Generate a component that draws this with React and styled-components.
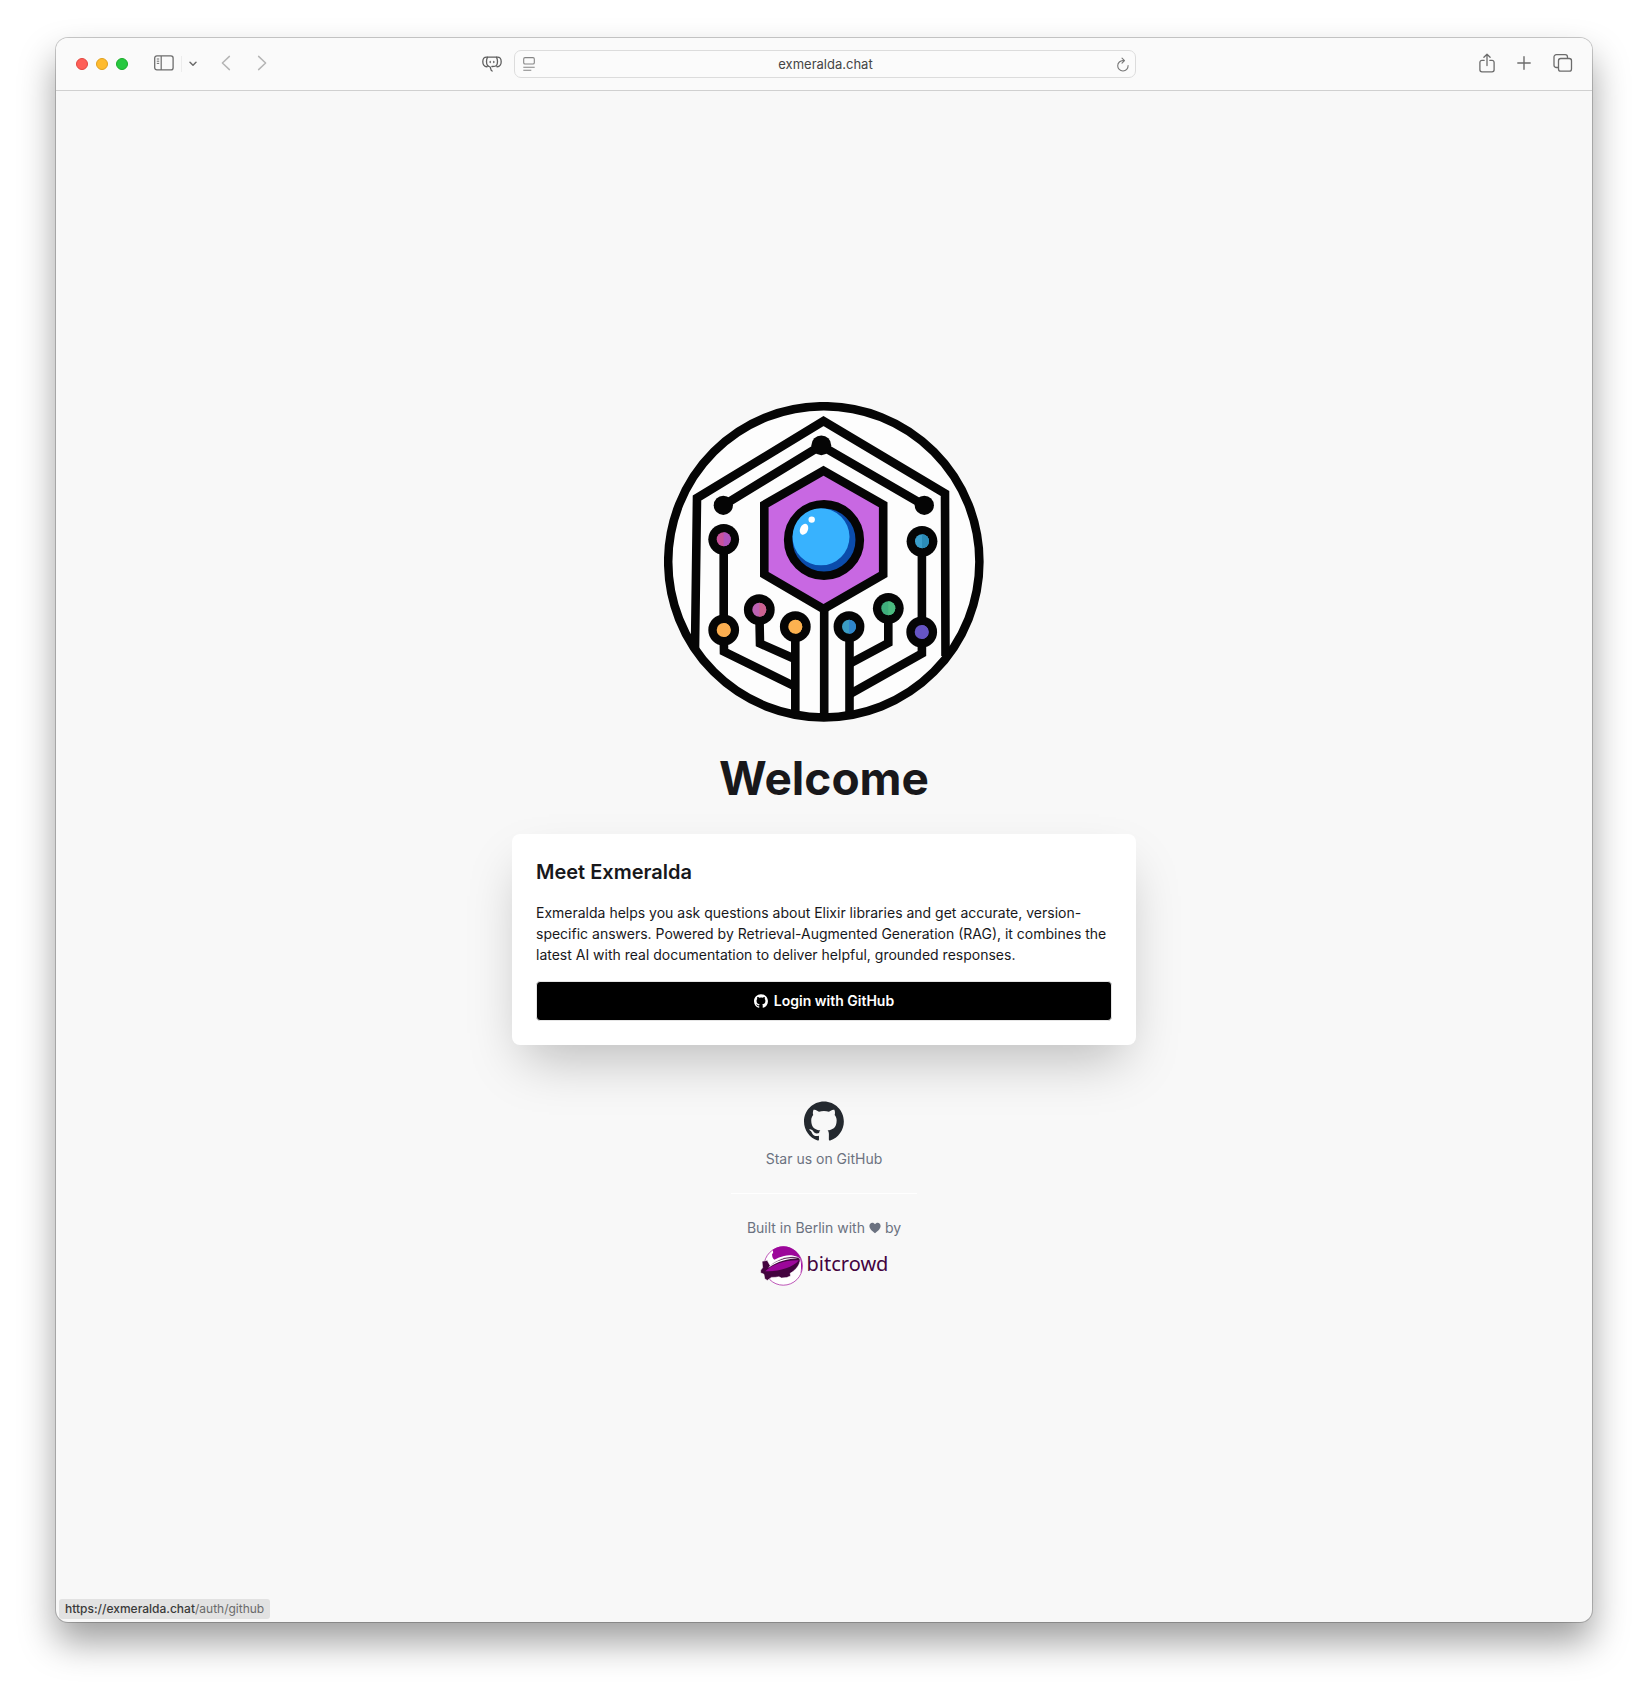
import styled, { createGlobalStyle } from "styled-components";

export default function App() {
  return (
    <>
      <GlobalStyle />
      <Desktop>
        <Window>
          <Toolbar />
          <Page>
            <Logo />
            <Title>Welcome</Title>
            <LoginCard />
            <Footer />
          </Page>
          <StatusBar>
            <strong>https://exmeralda.chat</strong>/auth/github
          </StatusBar>
        </Window>
      </Desktop>
    </>
  );
}

function Toolbar() {
  return (
    <Bar>
      <BarGroup>
        <Lights>
          <Light type="button" aria-label="Close" $color="#fe5f57" $edge="#e2463f" />
          <Light type="button" aria-label="Minimize" $color="#febb2e" $edge="#e0a01d" />
          <Light type="button" aria-label="Zoom" $color="#27c840" $edge="#1aab29" />
        </Lights>
        <SidebarButtons>
          <BarButton type="button" aria-label="Sidebar" $raised>
            <svg width="20" height="16" viewBox="0 0 20 16" fill="none" stroke="#6c6c6c">
              <rect x="0.7" y="0.9" width="18.4" height="14" rx="2.2" strokeWidth="1.3" />
              <path d="M7.2 1v14" strokeWidth="1.2" />
              <path d="M2.8 4h2.4M2.8 6.2h2.4M2.8 8.4h2.4" />
            </svg>
          </BarButton>
          <Separator />
          <BarButton type="button" aria-label="Tab groups">
            <svg width="8" height="6" viewBox="0 0 8 6" fill="none" stroke="#6c6c6c">
              <path d="M1 1.3l3 3 3-3" strokeWidth="1.5" strokeLinecap="round" strokeLinejoin="round" />
            </svg>
          </BarButton>
        </SidebarButtons>
        <HistoryButtons>
          <BarButton type="button" aria-label="Back" $raised>
            <svg width="10" height="16" viewBox="0 0 10 16" fill="none" stroke="#b5b5b5">
              <path d="M8.4 1.4L1.4 8l7 6.6" strokeWidth="1.5" strokeLinecap="round" strokeLinejoin="round" />
            </svg>
          </BarButton>
          <BarButton type="button" aria-label="Forward" $raised>
            <svg width="10" height="16" viewBox="0 0 10 16" fill="none" stroke="#b5b5b5">
              <path d="M1.6 1.4L8.6 8l-7 6.6" strokeWidth="1.5" strokeLinecap="round" strokeLinejoin="round" />
            </svg>
          </BarButton>
        </HistoryButtons>
        <Extension>
          <BarButton type="button" aria-label="Extension">
            <svg width="20" height="16" viewBox="0 0 20 16" fill="none" stroke="#5f5f5f" strokeWidth="1.3" strokeLinecap="round" strokeLinejoin="round">
              <path d="M5.4 1.2h9.2M5.4 1.2C2 .8.8 2.700.8 5.700S2.400 11 5.200 10.700M14.600 1.200c3.400-.4 4.600 1.500 4.600 4.500s-1.600 5.300-4.400 5" />
              <path d="M5.500 1.300C4.100 3.600 4.200 7.600 5.500 9.400c.8 1.100 2.200 1.300 2.700 1.600.6 1.200.2 3.400 2 4M14.500 1.300c1.400 2.300 1.300 6.300 0 8.100-1 1.200-2.300 1.100-4.600 1.100" />
              <path d="M8.200 5.400v1.200M11.800 5.400v1.200" />
            </svg>
          </BarButton>
        </Extension>
      </BarGroup>
      <AddressField>
        <svg width="12" height="14" viewBox="0 0 12 14" fill="none" stroke="#858585" aria-hidden="true">
          <rect x="0.7" y="0.6" width="10.6" height="6.4" rx="1.3" strokeWidth="1.1" />
          <path d="M0.3 10.2h11.4M0.3 13.2h8" strokeWidth="1.1" />
        </svg>
        <Address type="text" aria-label="Address" defaultValue="exmeralda.chat" />
        <BarButton type="button" aria-label="Reload">
          <svg width="12" height="15" viewBox="0 0 12 15" fill="none" stroke="#777" strokeLinecap="round" strokeLinejoin="round">
            <path d="M11.1 8.500A5.200 5.200 0 1 1 6.200 3.600h1.100M5 1.100l2.500 2.500L5 6.100" strokeWidth="1.1" />
          </svg>
        </BarButton>
      </AddressField>
      <BarGroup $end>
        <BarButton type="button" aria-label="Share" $raised>
          <svg width="16" height="20" viewBox="0 0 16 20" fill="none" stroke="#6c6c6c" strokeWidth="1.3" strokeLinecap="round" strokeLinejoin="round">
            <path d="M5.200 7.300H3A2.100 2.100 0 0 0 .9 9.400v7.300A2.100 2.100 0 0 0 3 18.800h10a2.100 2.100 0 0 0 2.100-2.100V9.400A2.100 2.100 0 0 0 13 7.300h-2.200M8 12.500V1.400M4.900 4.200L8 1.200l3.100 3" />
          </svg>
        </BarButton>
        <BarButton type="button" aria-label="New tab" $raised>
          <svg width="14" height="14" viewBox="0 0 14 14" fill="none" stroke="#6c6c6c" strokeWidth="1.4" strokeLinecap="round">
            <path d="M7 .8v12.400M.8 7h12.400" />
          </svg>
        </BarButton>
        <BarButton type="button" aria-label="Tab overview" $raised>
          <svg width="20" height="18" viewBox="0 0 20 18" fill="none" stroke="#6c6c6c" strokeWidth="1.3">
            <rect x="5.5" y="4.5" width="13" height="12.7" rx="2.2" />
            <path d="M5.300 13.500H3.300A2.300 2.300 0 0 1 1 11.200V3A2.300 2.300 0 0 1 3.300.7h8.900A2.300 2.300 0 0 1 14.500 3v1.300" />
          </svg>
        </BarButton>
      </BarGroup>
    </Bar>
  );
}

const NODES = [
  { x: 59.7, y: 137.3, left: "#c8529c", right: "#b054bd" },
  { x: 59.7, y: 228, left: "#fbae50", right: "#fbae50" },
  { x: 95.3, y: 207.7, left: "#bd62b4", right: "#cc6290" },
  { x: 131.3, y: 224.7, left: "#fdb250", right: "#fdb250" },
  { x: 185, y: 224.7, left: "#3a9cc4", right: "#2f86cc" },
  { x: 224.3, y: 206.3, left: "#3fae7c", right: "#4cbb80" },
  { x: 257.7, y: 230, left: "#6655c4", right: "#6655c4" },
  { x: 258, y: 139.3, left: "#3a9ecb", right: "#2b8cb8" },
];

function Logo() {
  return (
    <LogoImage viewBox="0 0 320 320" role="img" aria-label="Exmeralda">
      <circle cx="159.8" cy="159.8" r="155.6" fill="#fdfdfd" stroke="#050505" strokeWidth="8.5" />
      <g fill="none" stroke="#050505" strokeWidth="8.6">
        <path d="M31 247L33 96 159.500 19 281 91.500 281.500 254" />
        <path d="M59.300 103.300L157 43.500 260 103.300" />
        <path d="M59.700 137v91L60 249.500 131 284.500" />
        <path d="M95.300 208L96 241.500 131 257" />
        <path d="M131.300 225v88M160.200 205v111M185.500 225v88" />
        <path d="M224.300 206v35L186 261.500" />
        <path d="M257.900 139v112.500L186 292" />
      </g>
      <g fill="#050505">
        <circle cx="59.3" cy="103.3" r="9.6" />
        <circle cx="157.3" cy="43.3" r="9.9" />
        <circle cx="260.3" cy="103.3" r="9.6" />
      </g>
      <path
        d="M159.500 68.800L219.200 102.700V172.400L159.500 207 100.300 172.400V102.700Z"
        fill="#c868e2"
        stroke="#050505"
        strokeWidth="8.6"
      />
      <circle cx="160" cy="138" r="35.8" fill="#0b4cab" stroke="#050505" strokeWidth="8.6" />
      <circle cx="157" cy="134.800" r="28.5" fill="#38b2fe" />
      <ellipse cx="140" cy="127.300" rx="3.9" ry="5.7" transform="rotate(24 140 127.3)" fill="#fff" />
      <circle cx="147.7" cy="117.6" r="3.2" fill="#fff" />
      {NODES.map(({ x, y, left, right }) => (
        <g key={`${x}-${y}`}>
          <circle cx={x} cy={y} r="15.4" fill="#050505" />
          <circle cx={x} cy={y} r="7" fill={left} />
          <path d={`M${x} ${y - 7}a7 7 0 0 1 0 14z`} fill={right} />
        </g>
      ))}
    </LogoImage>
  );
}

function LoginCard() {
  return (
    <Card>
      <CardTitle>Meet Exmeralda</CardTitle>
      <CardText>
        Exmeralda helps you ask questions about Elixir libraries and get
        accurate, version-specific answers. Powered by Retrieval-Augmented
        Generation (RAG), it combines the latest AI with real documentation to
        deliver helpful, grounded responses.
      </CardText>
      <LoginLink href="/auth/github">
        <GitHubMark size={14} />
        Login with GitHub
      </LoginLink>
    </Card>
  );
}

function GitHubMark({ size }) {
  return (
    <svg width={size} height={size} viewBox="0 0 98 96" fill="currentColor" aria-hidden="true">
      <path
        fillRule="evenodd"
        d="M48.854 0C21.839 0 0 22 0 49.217c0 21.756 13.993 40.172 33.405 46.690 2.427.490 3.316-1.059 3.316-2.362 0-1.141-.080-5.052-.080-9.127-13.590 2.934-16.420-5.867-16.420-5.867-2.184-5.704-5.420-7.170-5.420-7.170-4.448-3.015.324-3.015.324-3.015 4.934.326 7.523 5.052 7.523 5.052 4.367 7.496 11.404 5.378 14.235 4.074.404-3.178 1.699-5.378 3.074-6.600-10.839-1.141-22.243-5.378-22.243-24.283 0-5.378 1.940-9.778 5.014-13.200-.485-1.222-2.184-6.275.486-13.038 0 0 4.125-1.304 13.426 5.052a46.970 46.970 0 0 1 12.214-1.630c4.125 0 8.330.571 12.213 1.630 9.302-6.356 13.427-5.052 13.427-5.052 2.670 6.763.970 11.816.485 13.038 3.155 3.422 5.015 7.822 5.015 13.200 0 18.905-11.404 23.060-22.324 24.283 1.780 1.548 3.316 4.481 3.316 9.126 0 6.600-.080 11.897-.080 13.526 0 1.304.890 2.853 3.316 2.364 19.412-6.520 33.405-24.935 33.405-46.691C97.707 22 75.788 0 48.854 0z"
      />
    </svg>
  );
}

function Footer() {
  return (
    <FooterBox>
      <StarLink href="https://github.com/bitcrowd/exmeralda">
        <StarIcon>
          <GitHubMark size={40} />
        </StarIcon>
        Star us on GitHub
      </StarLink>
      <Divider />
      <BuiltBy>
        Built in Berlin with
        <svg width="12" height="12" viewBox="0 0 12 12" fill="#6b7280" role="img" aria-label="love">
          <path d="M6 11.300C4.600 10.200.4 7.300.4 4.100.4 2.200 1.700.8 3.300.8c1.100 0 2.100.6 2.700 1.500C6.600 1.400 7.600.8 8.700.8c1.600 0 2.900 1.400 2.900 3.300 0 3.200-4.200 6.100-5.600 7.200z" />
        </svg>
        by
      </BuiltBy>
      <BitcrowdLink href="https://bitcrowd.net">
        <Zeppelin />
        bitcrowd
      </BitcrowdLink>
    </FooterBox>
  );
}

function Zeppelin() {
  return (
    <svg width="44" height="40" viewBox="0 0 44 40" aria-hidden="true">
      <circle cx="23.3" cy="20" r="19.2" fill="#fff" stroke="#a3109b" strokeWidth="0.7" />
      {/* sky */}
      <path
        d="M12.500 4.100C18.500-.9 28-1.400 35 4.600c6.800 5.900 8.800 14.700 5.600 22.700.6-5.500.9-9.800-.4-13.300-2-4.300-10-5.700-16.200-4-3.400.9-6.700 2.200-9.600 3.700-1.800-1.200-2.400-3.400-2.300-5.600 1.400-1 1.300-2.400.4-4z"
        fill="#9c069a"
      />
      {/* hull with fins and gondola */}
      <g fill="#43033f" stroke="#fff" strokeWidth="0.6">
        <path d="M2 15.300l5.200-1 3 5.400C17 12.800 29 9.300 37.500 11.300c2.200.6 3 2 2.500 4-1.100 5.200-5 9.400-9.800 12l.4 2.600-3.800 1.700-5.300.5-2.500-1.300c-2.400.5-5 .7-7.500.6l-4.200 3-2.600-1.600-.8-4.600L.5 26.800l.2-2.700 1.900-2.400z" />
      </g>
      <path d="M9.500 20.200C17 13.700 28.500 10.800 37.500 12.300c-8.800.1-20.500 3.200-29.300 9.700z" fill="#fff" />
      <path d="M5.200 25.200C12 18.500 26 13.700 38.900 14.300 33 21.500 18 26 5.200 25.200z" fill="#9c069a" />
    </svg>
  );
}

const GlobalStyle = createGlobalStyle`
  *, *::before, *::after {
    box-sizing: border-box;
  }

  body {
    margin: 0;
    background: #fff;
    color: #18181b;
    font-family: Inter, "Liberation Sans", sans-serif;
  }

  svg {
    display: block;
    flex-shrink: 0;
  }
`;

const Desktop = styled.div`
  display: flex;
  min-height: 100vh;
  padding: 38px 56px 74px;
`;

const Window = styled.div`
  position: relative;
  display: flex;
  flex: 1;
  flex-direction: column;
  overflow: hidden;
  border-radius: 12px;
  background: #f8f8f8;
  box-shadow:
    0 0 0 1px rgba(0, 0, 0, 0.2),
    0 20px 36px rgba(0, 0, 0, 0.38);
`;

const Bar = styled.header`
  display: grid;
  grid-template-columns: 1fr minmax(0, 622px) 1fr;
  align-items: center;
  gap: 12px;
  height: 53px;
  padding: 0 19px 0 20px;
  border-bottom: 1px solid #d0d0d0;
  background: #fafafa;
`;

const BarGroup = styled.div`
  display: flex;
  align-items: center;
  justify-content: ${(props) => (props.$end ? "flex-end" : "flex-start")};
  gap: ${(props) => (props.$end ? "22px" : "24px")};
`;

const Lights = styled.div`
  display: flex;
  gap: 8px;
  padding-right: 2px;
`;

const Light = styled.button`
  width: 12px;
  height: 12px;
  padding: 0;
  border: 1px solid ${(props) => props.$edge};
  border-radius: 50%;
  background: ${(props) => props.$color};
`;

const BarButton = styled.button`
  display: inline-flex;
  padding: 0 0 ${(props) => (props.$raised ? "2px" : "0")};
  border: 0;
  background: none;
`;

const SidebarButtons = styled.div`
  display: flex;
  align-items: center;
  gap: 7px;
`;

const Separator = styled.span`
  width: 1px;
  height: 16px;
  background: #ececec;
`;

const HistoryButtons = styled.div`
  display: flex;
  gap: 26px;
`;

const Extension = styled.div`
  display: flex;
  margin-left: auto;
`;

const AddressField = styled.div`
  display: flex;
  align-items: center;
  height: 28px;
  padding: 0 6px 0 8px;
  border: 1px solid #dcdcdc;
  border-radius: 7px;
  background: #fbfbfb;
`;

const Address = styled.input`
  flex: 1;
  min-width: 0;
  padding: 0;
  border: 0;
  outline: 0;
  background: none;
  color: #454545;
  font: 400 13px/20px Inter, "Liberation Sans", sans-serif;
  text-align: center;
`;

const Page = styled.main`
  display: flex;
  flex: 1;
  flex-direction: column;
  align-items: center;
  justify-content: center;
  padding: 32px 24px 58px;
`;

const LogoImage = styled.svg`
  width: 320px;
  height: 320px;
`;

const Title = styled.h1`
  margin: 32px 0;
  font-size: 46px;
  font-weight: 700;
  line-height: 48px;
`;

const Card = styled.section`
  display: flex;
  flex-direction: column;
  gap: 16px;
  width: 100%;
  max-width: 624px;
  padding: 24px;
  border-radius: 8px;
  background: #fff;
  box-shadow: 0 25px 50px -12px rgba(0, 0, 0, 0.25);
`;

const CardTitle = styled.h2`
  margin: 0;
  font-size: 20px;
  font-weight: 600;
  line-height: 28px;
`;

const CardText = styled.p`
  margin: 0;
  font-size: 14px;
  line-height: 21px;
`;

const LoginLink = styled.a`
  display: flex;
  align-items: center;
  justify-content: center;
  gap: 6px;
  height: 40px;
  border: 1px solid #e5e5e5;
  border-radius: 4px;
  background: #000;
  color: #fff;
  font-size: 14px;
  font-weight: 600;
  text-decoration: none;
`;

const FooterBox = styled.footer`
  display: flex;
  flex-direction: column;
  align-items: center;
  margin-top: 56px;
  color: #6b7280;
  font-size: 14px;
  line-height: 20px;
`;

const StarLink = styled.a`
  display: flex;
  flex-direction: column;
  align-items: center;
  gap: 8px;
  color: inherit;
  text-decoration: none;
`;

const StarIcon = styled.span`
  color: #24292f;
`;

const Divider = styled.hr`
  width: 100%;
  height: 1px;
  margin: 24px 0;
  border: 0;
  background: #fff;
`;

const BuiltBy = styled.p`
  display: flex;
  align-items: center;
  gap: 4px;
  margin: 0;
  padding: 0 16px;
`;

const BitcrowdLink = styled.a`
  display: flex;
  gap: 3px;
  margin-top: 8px;
  color: #43033f;
  font-family: "Noto Sans", sans-serif;
  font-size: 20px;
  line-height: 36px;
  text-decoration: none;
`;

const StatusBar = styled.div`
  position: absolute;
  bottom: 3px;
  left: 3px;
  padding: 0 6px;
  border-radius: 3px;
  background: #e2e2e2;
  color: #6a6a6a;
  font-size: 12px;
  line-height: 20px;

  strong {
    color: #3a3a3a;
    font-weight: 500;
  }
`;
